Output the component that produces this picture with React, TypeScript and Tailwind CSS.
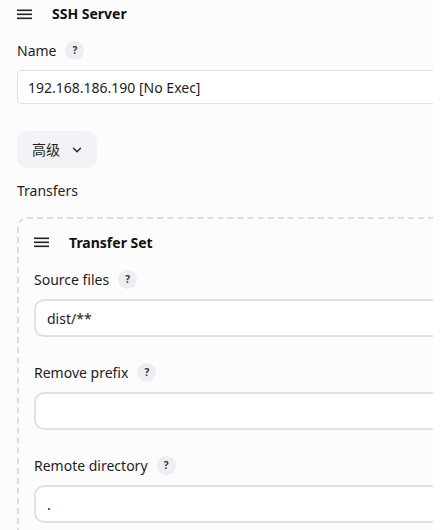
import { ChevronDown } from "lucide-react";

function Burger() {
  return (
    <svg width="15" height="12" viewBox="0 0 15 12" className="shrink-0">
      <rect x="0" y="1.5" width="15" height="1.6" fill="#222" />
      <rect x="0" y="5.5" width="15" height="1.6" fill="#222" />
      <rect x="0" y="9.5" width="15" height="1.6" fill="#222" />
    </svg>
  );
}

function Help() {
  return (
    <span className="ml-[9px] inline-flex size-[19px] items-center justify-center rounded-full bg-[#eceef2] text-[10px] font-bold text-[#333]">
      ?
    </span>
  );
}

function Field({ label, value }: { label: string; value: string }) {
  return (
    <div>
      <div className="flex h-[19px] items-center text-[14px] text-[#1d1d1f]">
        {label}
        <Help />
      </div>
      <div className="mt-[10px] flex h-[38px] w-[440px] items-center rounded-[10px] border-2 border-[#dde1ea] bg-white pl-[11px] text-[14px] text-[#1d1d1f]">
        {value}
      </div>
    </div>
  );
}

export default function App() {
  return (
    <div className="flex h-[530px] w-[445px] bg-white font-['Noto_Sans','Noto_Sans_CJK_SC',sans-serif]">
      <div className="h-full w-[433px] overflow-hidden bg-[#fcfcfd] pl-[17px]">
        <div className="flex h-[27px] items-center">
          <Burger />
          <span className="ml-[20px] text-[14px] font-bold text-[#111]">SSH Server</span>
        </div>

        <div className="mt-[14px] flex h-[19px] items-center text-[14px] text-[#1d1d1f]">
          Name
          <Help />
        </div>
        <div className="mt-[10px] flex h-[34px] w-[440px] items-center rounded-[5px] border border-[#dcdfe6] bg-white pl-[10px] text-[14px] text-[#1d1d1f]">
          192.168.186.190 [No Exec]
        </div>

        <button className="mt-[27px] flex h-[37px] w-[80px] items-center gap-[10px] rounded-[10px] bg-[#f1f3f6] pl-[15px] text-[14px] text-[#1d1d1f]">
          高级
          <ChevronDown size={14} strokeWidth={2.2} />
        </button>

        <div className="mt-[13px] flex h-[19px] items-center text-[14px] text-[#1d1d1f]">Transfers</div>

        <div className="mt-[17px] w-[450px] rounded-tl-[10px] border-t-2 border-l-2 border-dashed border-[#d8dde6] pl-[15px] pt-[13px] pb-[20px]">
          <div className="flex h-[20px] items-center">
            <Burger />
            <span className="ml-[20px] text-[14px] font-bold text-[#111]">Transfer Set</span>
          </div>
          <div className="mt-[18px] flex flex-col gap-[26px]">
            <Field label="Source files" value="dist/**" />
            <Field label="Remove prefix" value="" />
            <Field label="Remote directory" value="." />
          </div>
        </div>
      </div>
    </div>
  );
}
